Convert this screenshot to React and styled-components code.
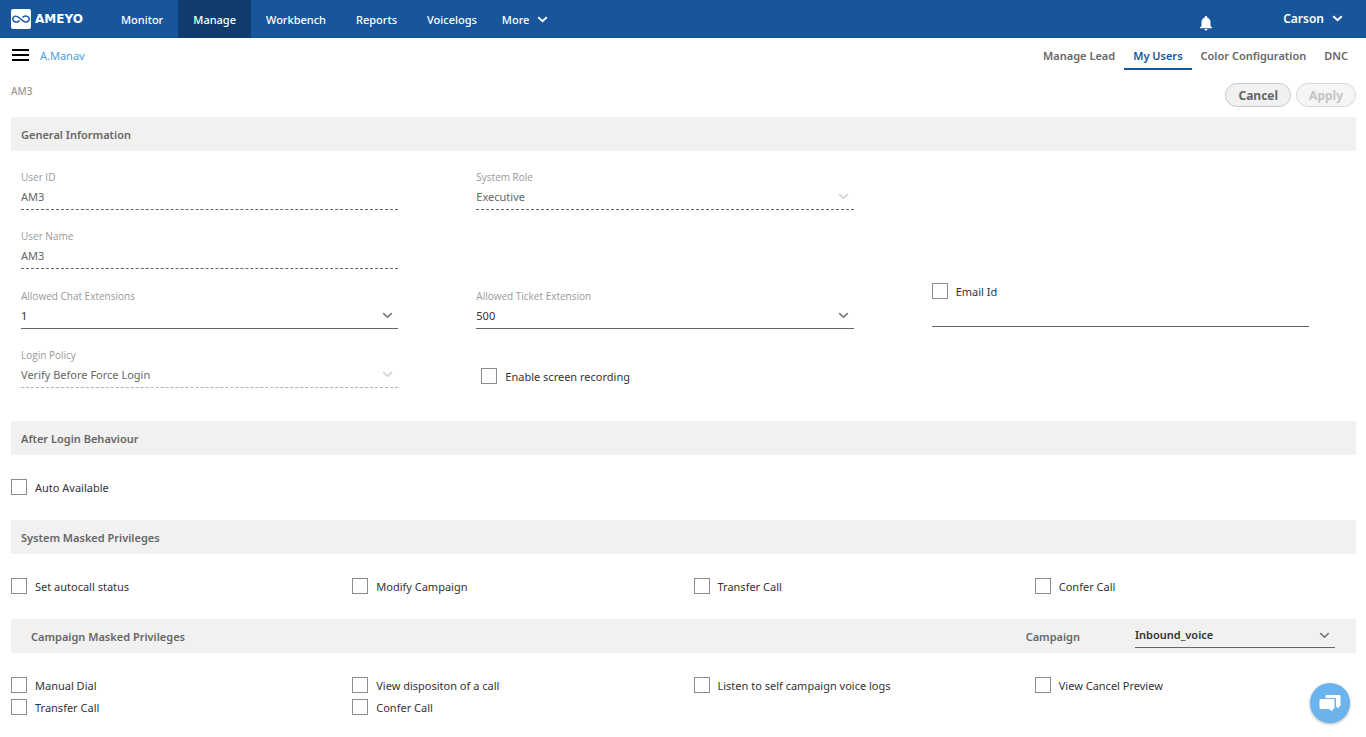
import styled, { createGlobalStyle } from "styled-components";
import { MdNotifications } from "react-icons/md";

const GlobalStyle = createGlobalStyle`
  * {
    box-sizing: border-box;
  }
  body {
    margin: 0;
    background: #fff;
    color: #333;
    font-family: "Noto Sans", "Open Sans", sans-serif;
    font-size: 11px;
  }
  button, input, select {
    font-family: inherit;
  }
`;

const Header = styled.header`
  display: flex;
  align-items: stretch;
  height: 38px;
  padding: 0 23px 0 11px;
  background: #17569b;
  color: #fff;
`;

const Logo = styled.a`
  display: flex;
  align-items: center;
  gap: 4px;
  width: 95px;
  color: #fff;
  font-family: "DejaVu Sans", sans-serif;
  font-size: 12px;
  font-weight: 700;
  text-decoration: none;
`;

const Nav = styled.nav`
  display: flex;
  flex: 1;
`;

const NavLink = styled.a`
  display: flex;
  align-items: center;
  padding: 0 15px;
  background: ${(props) => (props.$active ? "#0f3c6c" : "transparent")};
  color: #fff;
  font-weight: 500;
  text-decoration: none;
`;

const MoreButton = styled.button`
  display: flex;
  align-items: center;
  gap: 8px;
  padding: 0 10px;
  border: 0;
  background: none;
  color: #fff;
  font-size: 11px;
  font-weight: 500;
`;

const HeaderRight = styled.div`
  display: flex;
  align-items: center;
  gap: 68px;
`;

const BellButton = styled.button`
  display: flex;
  padding: 8px 0 0;
  border: 0;
  background: none;
  color: #fff;
`;

const UserButton = styled.button`
  display: flex;
  align-items: center;
  gap: 8px;
  padding: 0 0 2px;
  border: 0;
  background: none;
  color: #fff;
  font-size: 12px;
  font-weight: 600;
`;

const SubHeader = styled.div`
  display: flex;
  align-items: stretch;
  height: 32px;
  padding: 0 9px 0 12px;
`;

const MenuButton = styled.button`
  display: flex;
  align-items: center;
  padding: 2px 0 0;
  margin-right: 11px;
  border: 0;
  background: none;
`;

const Crumb = styled.a`
  padding-top: 10px;
  color: #4aa0e0;
  line-height: 16px;
  text-decoration: none;
`;

const Tabs = styled.nav`
  display: flex;
  margin-left: auto;
`;

const Tab = styled.a`
  padding: 10px 9px 0;
  border-bottom: 2px solid ${(props) => (props.$active ? "#17569b" : "transparent")};
  color: ${(props) => (props.$active ? "#17569b" : "#666")};
  font-weight: 600;
  line-height: 16px;
  text-decoration: none;
`;

const Page = styled.main`
  padding: 0 10px 0 11px;
`;

const TitleRow = styled.div`
  display: flex;
  justify-content: space-between;
  padding: 13px 0 10px;
`;

const PageTitle = styled.h1`
  margin: 0;
  color: #999;
  font-size: 10px;
  font-weight: 500;
  line-height: 16px;
`;

const Actions = styled.div`
  display: flex;
  gap: 5px;
`;

const ActionButton = styled.button`
  height: 24px;
  padding: 0 12px;
  border: 1px solid #c8c8c8;
  border-radius: 12px;
  background: #f1f1f1;
  color: #666;
  font-size: 12px;
  font-weight: 700;

  &:disabled {
    border-color: #d8d8d8;
    background: #f5f5f5;
    color: #c4c4c4;
  }
`;

const SectionBar = styled.div`
  display: flex;
  align-items: center;
  justify-content: space-between;
  height: 34px;
  padding: ${(props) => (props.$inset ? "0 21px 0 20px" : "0 10px")};
  background: #f1f1f1;
`;

const SectionTitle = styled.h2`
  margin: 0;
  padding-top: 1px;
  color: #666;
  font-size: 11px;
  font-weight: 600;
  line-height: 16px;
`;

const FieldGrid = styled.div`
  display: grid;
  grid-template-columns: repeat(3, 1fr);
  grid-template-rows: 41px 41px 42px 41px;
  align-items: end;
  gap: 18px 78px;
  padding: 18px 47px 33px 10px;
`;

const FieldBox = styled.div`
  grid-column: ${(props) => props.$column};
  grid-row: ${(props) => props.$row};
`;

const FieldLabel = styled.label`
  display: block;
  color: #999;
  font-family: "Open Sans", sans-serif;
  font-size: 10px;
  line-height: 16px;
`;

const lineColor = (props) => (props.$faded ? "#b3b3b3" : "#666");

const TextInput = styled.input`
  display: block;
  width: 100%;
  height: 25px;
  padding: 0 0 2px;
  border: 0;
  border-bottom: 1px ${(props) => (props.disabled ? "dashed" : "solid")} ${lineColor};
  border-radius: 0;
  outline: 0;
  background: none;
  color: #666;
  font-size: 11px;
`;

const SelectWrap = styled.div`
  position: relative;
  width: ${(props) => props.$width || "100%"};

  svg {
    position: absolute;
    top: 8px;
    right: 5px;
    color: ${(props) => (props.$disabled ? "#d0d0d0" : "#777")};
    pointer-events: none;
  }
`;

const SelectInput = styled.select`
  display: block;
  appearance: none;
  width: 100%;
  height: ${(props) => (props.$strong ? 24 : 25)}px;
  padding: 0 0 2px;
  border: 0;
  border-bottom: 1px ${(props) => (props.disabled ? "dashed" : "solid")} ${lineColor};
  border-radius: 0;
  outline: 0;
  background: none;
  color: ${(props) => (props.disabled ? "#666" : "#333")};
  font-size: 11px;
  font-weight: ${(props) => (props.$strong ? 600 : 400)};
  opacity: 1;
`;

const EmailBox = styled.div`
  display: flex;
  flex-direction: column;
  gap: 3px;
  grid-column: 3;
  grid-row: 2 / 4;
  padding-bottom: 2px;
`;

const ScreenBox = styled.div`
  grid-column: 2;
  grid-row: 4;
  align-self: start;
  padding: 21px 0 0 5px;
`;

const CheckLabel = styled.label`
  display: flex;
  align-items: center;
  gap: 8px;
  height: 16px;
  line-height: 16px;

  span {
    padding-top: 2px;
  }
`;

const CheckBox = styled.input`
  appearance: none;
  flex: none;
  width: 16px;
  height: 16px;
  margin: 0;
  border: 1px solid #8c8c8c;
  background: #fff;

  &:checked {
    background: #17569b;
  }
`;

const CheckGrid = styled.div`
  display: grid;
  grid-template-columns: repeat(4, 1fr);
  gap: 6px 21px;
  padding: 24px 1px 25px 0;
`;

const CampaignPicker = styled.div`
  display: flex;
  align-items: center;
  gap: 55px;
`;

const CampaignLabel = styled.label`
  color: #666;
  font-weight: 600;
`;

const ChatButton = styled.button`
  position: fixed;
  right: 16px;
  bottom: 14px;
  display: flex;
  align-items: center;
  justify-content: center;
  width: 40px;
  height: 40px;
  padding: 0;
  border: 0;
  border-radius: 50%;
  background: #6ab3ec;
  box-shadow: 0 1px 3px rgba(0, 0, 0, 0.3);
`;

const Chevron = ({ size = 11, weight = 1.6 }) => (
  <svg width={size} height="7" viewBox="0 0 11 7" fill="none" aria-hidden="true">
    <path d="M1.2 1.2 L5.5 5.2 L9.8 1.2" stroke="currentColor" strokeWidth={weight} />
  </svg>
);

const LogoMark = () => (
  <svg width="20" height="20" viewBox="0 0 20 20" aria-hidden="true">
    <rect width="20" height="20" rx="2" fill="#fff" />
    <path
      d="M8.6 11.4 C7.2 12.9 5.8 13.3 4.5 13 C0.8 12.2 0.8 7.9 4.5 7.1 C8.4 6.5 11.2 13.6 15.5 13 C19.2 12.2 19.2 7.9 15.5 7.1 C14 6.9 12.6 7.3 11.4 8.5"
      fill="none"
      stroke="#17569b"
      strokeWidth="1.4"
    />
  </svg>
);

const Field = ({ id, label, column, row, value }) => (
  <FieldBox $column={column} $row={row}>
    <FieldLabel htmlFor={id}>{label}</FieldLabel>
    <TextInput id={id} type="text" defaultValue={value} disabled />
  </FieldBox>
);

const SelectField = ({ id, label, column, row, value, disabled, faded }) => (
  <FieldBox $column={column} $row={row}>
    <FieldLabel htmlFor={id}>{label}</FieldLabel>
    <SelectWrap $disabled={disabled}>
      <SelectInput id={id} disabled={disabled} $faded={faded}>
        <option>{value}</option>
      </SelectInput>
      <Chevron />
    </SelectWrap>
  </FieldBox>
);

const Check = ({ label }) => (
  <CheckLabel>
    <CheckBox type="checkbox" />
    <span>{label}</span>
  </CheckLabel>
);

const navItems = ["Monitor", "Manage", "Workbench", "Reports", "Voicelogs"];
const tabs = ["Manage Lead", "My Users", "Color Configuration", "DNC"];
const systemPrivileges = ["Set autocall status", "Modify Campaign", "Transfer Call", "Confer Call"];
const campaignPrivileges = [
  "Manual Dial",
  "View dispositon of a call",
  "Listen to self campaign voice logs",
  "View Cancel Preview",
  "Transfer Call",
  "Confer Call",
];

const App = () => {
  return (
    <>
      <GlobalStyle />
      <Header>
        <Logo href="#">
          <LogoMark />
          AMEYO
        </Logo>
        <Nav>
          {navItems.map((item) => (
            <NavLink key={item} href="#" $active={item === "Manage"}>
              {item}
            </NavLink>
          ))}
          <MoreButton type="button">
            More
            <Chevron weight={2} />
          </MoreButton>
        </Nav>
        <HeaderRight>
          <BellButton type="button" aria-label="Notifications">
            <MdNotifications size={18} />
          </BellButton>
          <UserButton type="button">
            Carson
            <Chevron weight={2} />
          </UserButton>
        </HeaderRight>
      </Header>

      <SubHeader>
        <MenuButton type="button" aria-label="Menu">
          <svg width="17" height="12" viewBox="0 0 17 12" aria-hidden="true">
            <path d="M0 1h17M0 6h17M0 11h17" stroke="#000" strokeWidth="2" />
          </svg>
        </MenuButton>
        <Crumb href="#">A.Manav</Crumb>
        <Tabs>
          {tabs.map((tab) => (
            <Tab key={tab} href="#" $active={tab === "My Users"}>
              {tab}
            </Tab>
          ))}
        </Tabs>
      </SubHeader>

      <Page>
        <TitleRow>
          <PageTitle>AM3</PageTitle>
          <Actions>
            <ActionButton type="button">Cancel</ActionButton>
            <ActionButton type="button" disabled>
              Apply
            </ActionButton>
          </Actions>
        </TitleRow>

        <SectionBar>
          <SectionTitle>General Information</SectionTitle>
        </SectionBar>
        <FieldGrid>
          <Field id="userId" label="User ID" column={1} row={1} value="AM3" />
          <SelectField id="role" label="System Role" column={2} row={1} value="Executive" disabled />
          <Field id="userName" label="User Name" column={1} row={2} value="AM3" />
          <SelectField id="chatExt" label="Allowed Chat Extensions" column={1} row={3} value="1" />
          <SelectField id="ticketExt" label="Allowed Ticket Extension" column={2} row={3} value="500" />
          <EmailBox>
            <Check label="Email Id" />
            <TextInput type="email" aria-label="Email address" />
          </EmailBox>
          <SelectField
            id="policy"
            label="Login Policy"
            column={1}
            row={4}
            value="Verify Before Force Login"
            disabled
            faded
          />
          <ScreenBox>
            <Check label="Enable screen recording" />
          </ScreenBox>
        </FieldGrid>

        <SectionBar>
          <SectionTitle>After Login Behaviour</SectionTitle>
        </SectionBar>
        <CheckGrid>
          <Check label="Auto Available" />
        </CheckGrid>

        <SectionBar>
          <SectionTitle>System Masked Privileges</SectionTitle>
        </SectionBar>
        <CheckGrid>
          {systemPrivileges.map((name) => (
            <Check key={name} label={name} />
          ))}
        </CheckGrid>

        <SectionBar $inset>
          <SectionTitle>Campaign Masked Privileges</SectionTitle>
          <CampaignPicker>
            <CampaignLabel htmlFor="campaign">Campaign</CampaignLabel>
            <SelectWrap $width="200px">
              <SelectInput id="campaign" $strong>
                <option>Inbound_voice</option>
              </SelectInput>
              <Chevron />
            </SelectWrap>
          </CampaignPicker>
        </SectionBar>
        <CheckGrid>
          {campaignPrivileges.map((name) => (
            <Check key={name} label={name} />
          ))}
        </CheckGrid>
      </Page>

      <ChatButton type="button" aria-label="Chat">
        <svg width="22" height="18" viewBox="0 0 22 18" aria-hidden="true">
          <path d="M7.5 1h13a1 1 0 0 1 1 1v9.5a1 1 0 0 1-1 1h-.5v2l-3-2V5a1 1 0 0 0-1-1H6.5V2a1 1 0 0 1 1-1z" fill="#fff" />
          <path d="M1.5 5H14.5a1 1 0 0 1 1 1v8a1 1 0 0 1-1 1h-1v2.5l-3.5-2.5H1.5a1 1 0 0 1-1-1V6a1 1 0 0 1 1-1z" fill="#fff" />
        </svg>
      </ChatButton>
    </>
  );
};

export default App;
